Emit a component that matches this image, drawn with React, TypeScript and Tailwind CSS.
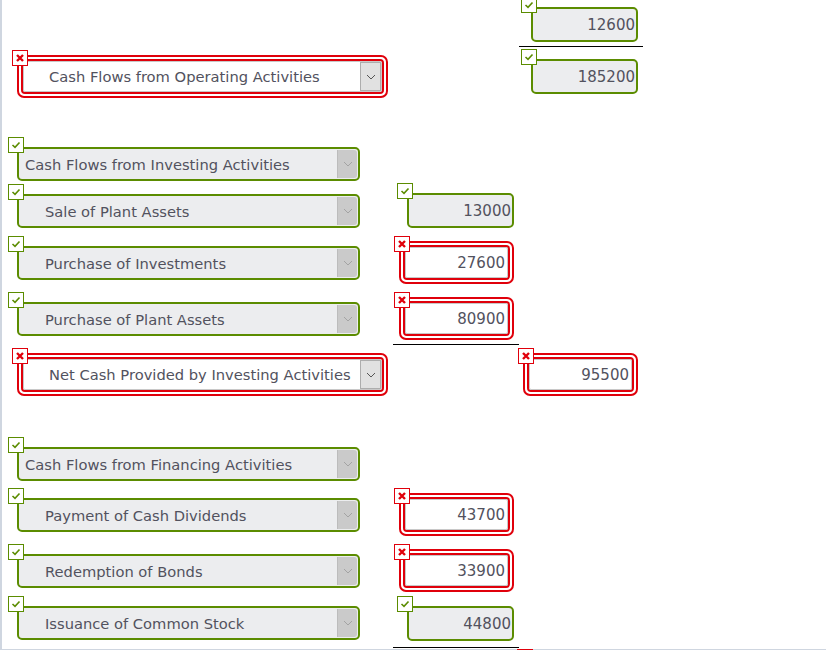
import type { ReactNode } from 'react'

const FONT = { fontFamily: '"DejaVu Sans", Verdana, sans-serif' }

function Chevron({ color }: { color: string }) {
  return (
    <svg width="10" height="6" viewBox="0 0 10 6" fill="none">
      <path d="M1 1 L5 5 L9 1" stroke={color} strokeWidth="1" />
    </svg>
  )
}

// little status marker sitting on the top-left corner of a field
function Badge({ ok, className }: { ok: boolean; className: string }) {
  return (
    <div
      className={`absolute z-10 flex h-4 w-4 items-center justify-center border bg-white ${
        ok ? 'border-[#5b8c00]' : 'border-[#e0000b]'
      } ${className}`}
    >
      {ok ? (
        <svg width="10" height="8" viewBox="0 0 10 8" fill="none">
          <path d="M1.5 4 L4 6.3 L8.5 1.5" stroke="#5b8c00" strokeWidth="1.6" />
        </svg>
      ) : (
        <svg width="10" height="10" viewBox="0 0 10 10" fill="none">
          <path d="M2 2 L8 8 M8 2 L2 8" stroke="#e0000b" strokeWidth="2.4" />
        </svg>
      )}
    </div>
  )
}

function RedFrame({ width, children }: { width: string; children: ReactNode }) {
  return (
    <div className={`relative ${width}`}>
      <Badge ok={false} className="-left-[5px] -top-[5px]" />
      <div className="h-[43px] rounded-[7px] border-2 border-[#e0000b] bg-white p-[2px]">
        <div className="h-full rounded-[4px] border-2 border-[#e0000b]">
          <div className="relative flex h-full items-center rounded-[2px] border border-[#c8c8c8] bg-white pt-[2px]">
            {children}
          </div>
        </div>
      </div>
    </div>
  )
}

function GreenSelect({ label, indent = false }: { label: string; indent?: boolean }) {
  return (
    <div className="relative w-[343px]">
      <Badge ok className="-left-[9px] -top-[10px]" />
      <div className="relative flex h-[34px] items-center rounded-[5px] border-2 border-[#5b8c00] bg-[#ecedef] pt-[2px]">
        <span className={`text-[14.7px] text-[#52525e] ${indent ? 'pl-[26px]' : 'pl-[6px]'}`}>
          {label}
        </span>
        <div className="absolute bottom-[1px] right-[1px] top-[1px] flex w-[20px] items-center justify-center rounded-r-[3px] border-l border-[#bcbcbc] bg-[#cacaca]">
          <Chevron color="#a3a3a3" />
        </div>
      </div>
    </div>
  )
}

function RedSelect({ label }: { label: string }) {
  return (
    <RedFrame width="w-[371px]">
      <span className="pl-[25px] text-[14.7px] text-[#52525e]">{label}</span>
      <div className="absolute bottom-0 right-0 top-0 flex w-[21px] items-center justify-center border border-[#adadad] bg-[#e1e1e1]">
        <Chevron color="#555" />
      </div>
    </RedFrame>
  )
}

function GreenNum({ value }: { value: string }) {
  return (
    <div className="relative w-[107px]">
      <Badge ok className="-left-[10px] -top-[10px]" />
      <div className="flex h-[35px] items-center justify-end rounded-[5px] border-2 border-[#5b8c00] bg-[#ecedef] pr-[1px] pt-[2px] text-[15px] text-[#52525e]">
        {value}
      </div>
    </div>
  )
}

function RedNum({ value }: { value: string }) {
  return (
    <RedFrame width="w-[115px]">
      <span className="w-full pr-[2px] text-right text-[15px] text-[#52525e]">{value}</span>
    </RedFrame>
  )
}

interface RowProps {
  h: string
  a?: ReactNode
  b?: ReactNode
  c?: ReactNode
  lineB?: boolean
  lineC?: boolean
}

function Row({ h, a, b, c, lineB, lineC }: RowProps) {
  return (
    <div className={`grid grid-cols-[391px_126px_124px] ${h}`}>
      <div className="pl-[15px]">{a}</div>
      <div className={`flex justify-end pr-[5px] ${lineB ? 'border-b border-black' : ''}`}>
        <div>{b}</div>
      </div>
      <div className={`flex justify-end pr-[5px] ${lineC ? 'border-b border-black' : ''}`}>
        <div>{c}</div>
      </div>
    </div>
  )
}

export default function App() {
  return (
    <div className="h-[653px] w-[826px] overflow-hidden bg-white" style={FONT}>
      <div className="border-l-2 border-[#cfd6e0] pb-[1px]">
        <Row h="h-[47px]" lineC c={<div className="mt-[7px]"><GreenNum value="12600" /></div>} />
        <Row
          h="h-[53px]"
          a={<div className="mt-[8px]"><RedSelect label="Cash Flows from Operating Activities" /></div>}
          c={<div className="mt-[12px]"><GreenNum value="185200" /></div>}
        />
        <div className="h-[37px]" />
        <Row h="h-[47px]" a={<div className="mt-[10px]"><GreenSelect label="Cash Flows from Investing Activities" /></div>} />
        <Row
          h="h-[52px]"
          a={<div className="mt-[10px]"><GreenSelect indent label="Sale of Plant Assets" /></div>}
          b={<div className="mt-[9px]"><GreenNum value="13000" /></div>}
        />
        <Row
          h="h-[56px]"
          a={<div className="mt-[10px]"><GreenSelect indent label="Purchase of Investments" /></div>}
          b={<div className="mt-[5px]"><RedNum value="27600" /></div>}
        />
        <Row
          h="h-[53px]"
          lineB
          a={<div className="mt-[10px]"><GreenSelect indent label="Purchase of Plant Assets" /></div>}
          b={<div className="mt-[5px]"><RedNum value="80900" /></div>}
        />
        <Row
          h="h-[92px]"
          a={<div className="mt-[8px]"><RedSelect label="Net Cash Provided by Investing Activities" /></div>}
          c={<div className="mt-[8px]"><RedNum value="95500" /></div>}
        />
        <Row h="h-[51px]" a={<div className="mt-[10px]"><GreenSelect label="Cash Flows from Financing Activities" /></div>} />
        <Row
          h="h-[56px]"
          a={<div className="mt-[10px]"><GreenSelect indent label="Payment of Cash Dividends" /></div>}
          b={<div className="mt-[5px]"><RedNum value="43700" /></div>}
        />
        <Row
          h="h-[52px]"
          a={<div className="mt-[10px]"><GreenSelect indent label="Redemption of Bonds" /></div>}
          b={<div className="mt-[5px]"><RedNum value="33900" /></div>}
        />
        <Row
          h="h-[52px]"
          lineB
          a={<div className="mt-[10px]"><GreenSelect indent label="Issuance of Common Stock" /></div>}
          b={<div className="mt-[10px]"><GreenNum value="44800" /></div>}
        />
      </div>
      {/* bottom edge of the frame; the red bit is the next row's marker peeking through */}
      <div className="flex h-px">
        <div className="w-[517px] bg-[#cfd6e0]" />
        <div className="w-[16px] bg-[#e0000b]" />
        <div className="flex-1 bg-[#cfd6e0]" />
      </div>
    </div>
  )
}
